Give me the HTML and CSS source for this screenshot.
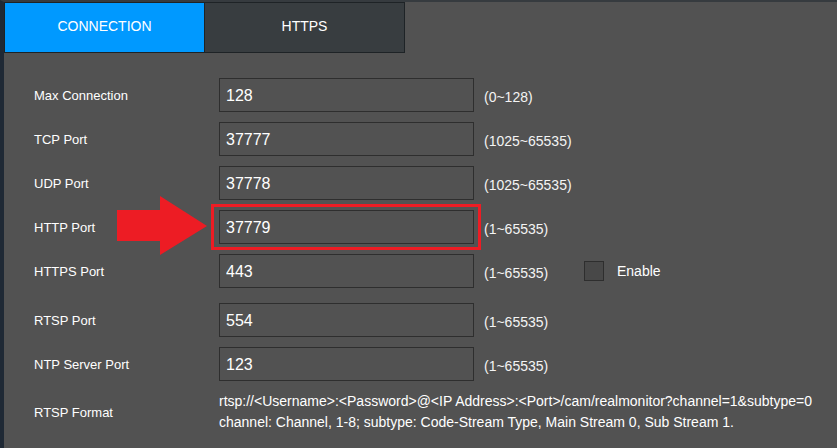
FILE: index.html
```html
<!DOCTYPE html>
<html lang="en">
<head>
    <meta charset="UTF-8">
    <title>Network Connection</title>
    <link rel="stylesheet" href="styles.css">
</head>
<body>
    <div class="frame">
        <div class="tabs">
            <div class="tab active">CONNECTION</div>
            <div class="tab">HTTPS</div>
        </div>

        <div class="form">
            <div class="row">
                <span class="label">Max Connection</span>
                <div class="field"><input type="text" value="128"></div>
                <span class="hint">(0~128)</span>
            </div>
            <div class="row">
                <span class="label">TCP Port</span>
                <div class="field"><input type="text" value="37777"></div>
                <span class="hint">(1025~65535)</span>
            </div>
            <div class="row">
                <span class="label">UDP Port</span>
                <div class="field"><input type="text" value="37778"></div>
                <span class="hint">(1025~65535)</span>
            </div>
            <div class="row">
                <span class="label">HTTP Port</span>
                <div class="field">
                    <input type="text" value="37779">
                    <!-- annotation: arrow + red box -->
                    <svg class="arrow" width="91" height="59" viewBox="0 0 91 59">
                        <polygon points="0,14 43,14 43,0 90,30 43,59 43,45 0,45" fill="#ed1c24"/>
                    </svg>
                    <span class="highlight"></span>
                </div>
                <span class="hint">(1~65535)</span>
            </div>
            <div class="row row-https">
                <span class="label">HTTPS Port</span>
                <div class="field"><input type="text" value="443"></div>
                <span class="hint">(1~65535)</span>
                <label class="check">
                    <input type="checkbox">
                    <span class="box"></span>
                    Enable
                </label>
            </div>
            <div class="row">
                <span class="label">RTSP Port</span>
                <div class="field"><input type="text" value="554"></div>
                <span class="hint">(1~65535)</span>
            </div>
            <div class="row">
                <span class="label">NTP Server Port</span>
                <div class="field"><input type="text" value="123"></div>
                <span class="hint">(1~65535)</span>
            </div>
            <div class="row row-format">
                <span class="label">RTSP Format</span>
                <div class="format">
                    rtsp://&lt;Username&gt;:&lt;Password&gt;@&lt;IP Address&gt;:&lt;Port&gt;/cam/realmonitor?channel=1&amp;subtype=0<br>
                    channel: Channel, 1-8; subtype: Code-Stream Type, Main Stream 0, Sub Stream 1.
                </div>
            </div>
        </div>
    </div>
</body>
</html>
```

FILE: styles.css
```css
html, body {
    margin: 0;
    height: 100%;
    overflow: hidden;
}

body {
    background-color: #525252;
    color: #ffffff;
    font-family: "Liberation Sans", Arial, sans-serif;
}

.frame {
    height: 100%;
    box-sizing: border-box;
    border-left: 4px solid #1f2935;
    border-top: 2px solid #363b3f;
}

/* Tabs */
.tabs {
    display: flex;
}

.tab {
    width: 199px;
    height: 49px;
    line-height: 46px;
    text-align: center;
    font-size: 14px;
    background-color: #383d40;
    border: 1px solid #1e2326;
    border-left: none;
}

.tab:first-child {
    border-left: 1px solid #1e2326;
}

.tab.active {
    background-color: #0099ff;
}

/* Form */
.form {
    padding: 25px 0 0 30px;
    display: flex;
    flex-direction: column;
    gap: 10px;
}

.row {
    display: flex;
    align-items: center;
}

.row-https {
    margin-bottom: 5px;
}

.label {
    width: 185px;
    font-size: 13px;
}

.field {
    position: relative;
}

.field input {
    display: block;
    box-sizing: border-box;
    width: 255px;
    height: 34px;
    margin: 0;
    padding: 2px 6px 0;
    background-color: #525252;
    border: 1px solid #2e2e2e;
    color: #ffffff;
    font-family: "Liberation Sans", Arial, sans-serif;
    font-size: 16px;
    outline: none;
}

.hint {
    width: 100px;
    margin-left: 10px;
    padding-top: 4px;
    font-size: 14px;
    color: #f4f4f4;
}

.check {
    display: flex;
    align-items: center;
    font-size: 14px;
}

.check input {
    display: none;
}

.check .box {
    width: 18px;
    height: 18px;
    margin-right: 13px;
    background-color: #484848;
    border: 1px solid #2e2e2e;
}

/* Annotation over the HTTP port field */
.highlight {
    position: absolute;
    left: -8px;
    top: -6px;
    right: -7px;
    bottom: -6px;
    border: 3px solid #ed1c24;
}

.arrow {
    position: absolute;
    left: -102px;
    top: -14px;
}

.format {
    font-size: 14px;
    line-height: 21px;
}
```
